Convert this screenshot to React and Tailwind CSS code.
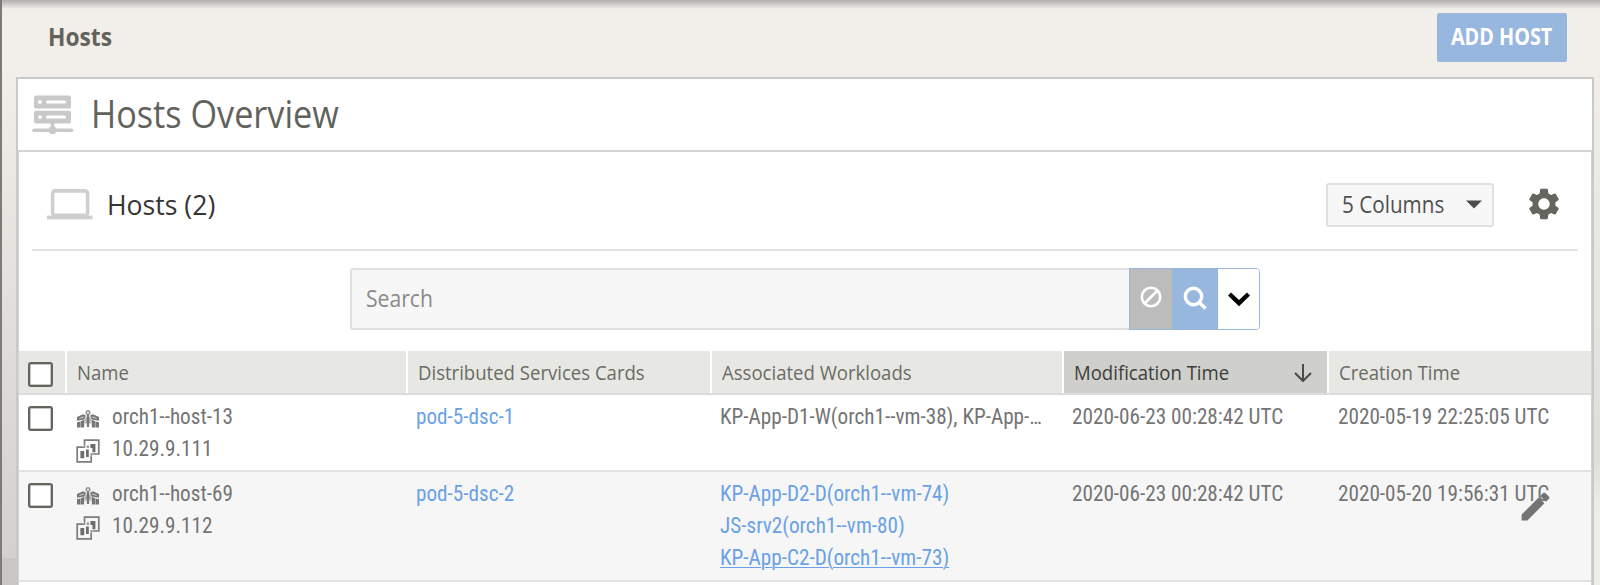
import React from 'react';
import { MdSettings, MdEdit } from 'react-icons/md';

const HEAD_FONT = "font-['Open_Sans',sans-serif]";
const NARROW = "inline-block origin-left scale-x-[0.905]";

const ServerIcon = () => (
  <svg className="block h-[40px] w-[42px]" viewBox="0 0 42 40" fill="none">
    <path fill="#c9c9c9" fillRule="evenodd" d="M4 0.500h33a2 2 0 0 1 2 2v9a2 2 0 0 1-2 2H4a2 2 0 0 1-2-2v-9a2 2 0 0 1 2-2zM8 5a1.900 1.900 0 1 0 0 3.800A1.900 1.900 0 0 0 8 5zM15.500 5.400a1.500 1.500 0 0 0 0 3h17a1.500 1.500 0 0 0 0-3z" />
    <path fill="#c9c9c9" fillRule="evenodd" d="M4 15.800h33a2 2 0 0 1 2 2v8.800a2 2 0 0 1-2 2H4a2 2 0 0 1-2-2v-8.800a2 2 0 0 1 2-2zM8 20.200a1.900 1.900 0 1 0 0 3.800A1.900 1.900 0 0 0 8 20.200zM15.500 20.600a1.500 1.500 0 0 0 0 3h17a1.500 1.500 0 0 0 0-3z" />
    <path stroke="#c9c9c9" strokeWidth="3.600" strokeLinecap="round" d="M2 35.200h37.500" />
    <path stroke="#c9c9c9" strokeWidth="3.600" d="M20.500 28v5" />
    <circle cx="20.500" cy="35.200" r="3.900" fill="#c9c9c9" />
  </svg>
);

const LaptopIcon = () => (
  <svg className="mt-[2px] block h-[31px] w-[46px]" viewBox="0 0 46 31" fill="none">
    <rect x="5.600" y="1.900" width="35" height="24.400" rx="2.500" stroke="#cfcfcd" strokeWidth="3.600" />
    <rect x="0" y="26.600" width="45.500" height="3.800" fill="#cfcfcd" />
  </svg>
);

const HostIcon = () => (
  <svg className="block h-[18px] w-[24px]" viewBox="0 0 24 18">
    <g fill="#767676">
      <path d="M1 7L7 4.200 10 5.600 8.400 9.400 1 10.800z" />
      <path d="M23 7L17 4.200 14 5.600 15.600 9.400 23 10.800z" />
      <path d="M1 12.200l3.600-.8v6H1zM5 11l3.600-1.200-.6 7.600H5z" />
      <path d="M23 12.200l-3.600-.8v6H23zM19 11l-3.600-1.200.6 7.600h3z" />
      <path d="M10.900 5h2.200v12h-2.200z" />
      <path d="M9.400 8l1.500-1v6l-1.500 1zM14.600 8l-1.500-1v6l1.500 1z" opacity=".7" />
    </g>
    <circle cx="12" cy="2.600" r="1.800" fill="#e8e8e8" stroke="#929292" strokeWidth="1.400" />
    <path d="M3.500 8.400l4.500-1.600M20.500 8.400l-4.500-1.600" stroke="#fff" strokeWidth="1.100" opacity=".6" />
  </svg>
);

const VmIcon = () => (
  <svg className="block h-[24px] w-[24px]" viewBox="0 0 24 24" fill="none">
    <path stroke="#7c7c7c" strokeWidth="1.700" d="M8.500 5.800V1.200h14.300v13.800H18" />
    <path stroke="#7c7c7c" strokeWidth="1.700" d="M6.500 8.200H1.200v14.600h14v-5.300" />
    <path stroke="#8c8c8c" strokeWidth="1.400" d="M6 8.200h2.500V5.500M15.200 18V15H18.500" />
    <path fill="#6c6c6c" d="M14.400 5h5v8.200h-3V9h-2zM4.400 12h3.800v7.300H4.400zM10 10.500h2.800v7.500H10z" />
    <path fill="#909090" d="M10.600 6.500h2.400v2.300h-2.400z" />
  </svg>
);

const Box = () => <span className="block h-[25px] w-[25px] rounded-[3px] border-2 border-[#65655f] bg-white shadow-[inset_0_0_0_0.5px_#8f8f8a]" />;

function HostName({ name, ip }) {
  return (
    <div className="flex flex-col">
      <div className="flex h-[32px] items-center gap-[12px]">
        <span className="w-[24px] pt-[3px]"><HostIcon /></span>
        {name}
      </div>
      <div className="flex h-[32px] items-center gap-[12px]">
        <span className="w-[24px] pt-[3px]"><VmIcon /></span>
        {ip}
      </div>
    </div>
  );
}

const COLS = "grid grid-cols-[46px_341px_304px_352px_265px_1fr]";
const BODY = "font-[Roboto,sans-serif] text-[21.200px] leading-[32px] font-stretch-75% text-[#747474]";
const LINK = "text-[#6aa1e6] font-[450]";

function HeadCell({ children, icon, className = "bg-[#e7e8e3] text-[#6b6b65]" }) {
  return (
    <div className={"flex items-center justify-between border-l-2 border-white pl-[10px] " + className}>
      <span className={NARROW}>{children}</span>
      {icon}
    </div>
  );
}

export default function App() {
  return (
    <div className="relative flex h-[585px] w-[1600px] flex-col overflow-hidden border-l-2 border-[#7d7b79] bg-[#f2eeea] whitespace-nowrap">
      <div className="absolute inset-x-0 top-0 h-[9px] bg-linear-to-b from-[#b0adab] to-[#f2eeea]/0" />
      <header className={"flex h-[77px] shrink-0 items-start justify-between pr-[33px] pl-[46px] " + HEAD_FONT}>
        <h1 className="mt-[18px] text-[25px] leading-[36px] font-bold text-[#63635e]"><span className="inline-block origin-left scale-x-[0.91]">Hosts</span></h1>
        <button className="mt-[13px] flex h-[49px] w-[130px] items-center justify-center rounded-[2px] bg-[#97b7de] pb-[2px] text-[22.500px] font-bold text-white">
          <span className="inline-block scale-x-[0.88]">ADD HOST</span>
        </button>
      </header>

      <div className="flex grow">
        <div className="flex w-[14px] shrink-0 flex-col">
          <div className="h-[481px] bg-linear-to-b from-[#f1eeea] via-[#dedcd8] via-60% to-[#d3d1cd]" />
          <div className="grow bg-[#c9c7c4]" />
        </div>
        <main className="flex w-[1578px] shrink-0 flex-col border-x-2 border-t-2 border-[#c9c9c9] bg-white">
          <section className={"flex h-[71px] shrink-0 items-center pl-[14px] " + HEAD_FONT}>
            <ServerIcon />
            <h2 className="ml-[17px] pb-[3px] text-[38px] leading-[48px] font-[450] text-[#62625d]"><span className="inline-block origin-left scale-x-[0.9]">Hosts Overview</span></h2>
          </section>

          <section className="flex grow flex-col border-x border-t-2 border-[#d4d4d4]">
            <div className={"mx-[13px] flex h-[99px] shrink-0 items-center border-b-2 border-[#e3e3e3] pt-[6px] pl-[15px] " + HEAD_FONT}>
              <LaptopIcon />
              <h3 className="ml-[14px] text-[28px] font-[450] text-[#353535]"><span className="inline-block origin-left scale-x-[0.95]">Hosts (2)</span></h3>
              <div className="mt-[2px] ml-auto flex h-[44px] w-[168px] items-center rounded-[3px] border-2 border-[#e0e0e0] bg-[#f7f7f7] pl-[14px] text-[23.500px] font-[450] text-[#50504d]">
                <span className="w-[124px] shrink-0"><span className="inline-block origin-left scale-x-[0.88]">5 Columns</span></span>
                <svg className="h-[9px] w-[16px] shrink-0" viewBox="0 0 16 9"><path d="M0 0.500h16L8 8.500z" fill="#4c4c4c" /></svg>
              </div>
              <MdSettings className="mr-[15px] ml-[31px] h-[38px] w-[38px] text-[#65655f]" />
            </div>

            <div className="mt-[17px] ml-[331px] flex h-[62px] w-[910px] shrink-0">
              <div className={"flex grow items-center rounded-l-[3px] border-2 border-r-0 border-[#e0e0e0] bg-[#f7f7f7] pl-[14px] text-[23.500px] font-[450] text-[#8a8a8a] " + HEAD_FONT}>
                <span className="inline-block origin-left scale-x-[0.9]">Search</span>
              </div>
              <div className="flex w-[131px] overflow-hidden rounded-r-[4px] border border-[#97b7de]">
                <div className="flex w-[42px] items-center justify-center bg-[#bcbcbc]">
                  <svg className="mb-[4px] h-[22px] w-[22px]" viewBox="0 0 22 22" fill="none" stroke="#fff" strokeWidth="2.600">
                    <circle cx="11" cy="11" r="9.200" />
                    <path d="M4.500 17.500l13-13" />
                  </svg>
                </div>
                <div className="flex w-[46px] items-center justify-center bg-[#97b7de]">
                  <svg className="mb-[2px] h-[24px] w-[24px]" viewBox="0 0 24 24" fill="none" stroke="#fff">
                    <circle cx="10.500" cy="10.500" r="8.200" strokeWidth="3.400" />
                    <path d="M16.500 16.500l6 6" strokeWidth="3.600" />
                  </svg>
                </div>
                <div className="flex grow items-center justify-center bg-white">
                  <svg className="h-[15px] w-[22px]" viewBox="0 0 22 15"><path d="M3 0.500L11 8 19 0.500 22 3.600 11 14.300 0 3.600z" fill="#000" /></svg>
                </div>
              </div>
            </div>

            <div className={"mt-[21px] h-[44px] shrink-0 border-b-2 border-[#dcdddb] bg-[#e7e8e3] text-[20.500px] font-medium " + COLS + " " + HEAD_FONT}>
              <div className="flex items-center pt-[4px] pl-[9px]"><Box /></div>
              <HeadCell>Name</HeadCell>
              <HeadCell>Distributed Services Cards</HeadCell>
              <HeadCell>Associated Workloads</HeadCell>
              <HeadCell
                className="bg-[#cfd0cb] pr-[15px] text-[#3d3d39]"
                icon={<svg className="mt-[2px] h-[18px] w-[18px]" viewBox="0 0 18 18" fill="none" stroke="#4a4a46" strokeWidth="2"><path d="M9 0v16.500M1 9l8 8 8-8" /></svg>}
              >
                Modification Time
              </HeadCell>
              <HeadCell>Creation Time</HeadCell>
            </div>

            <div className={"h-[77px] shrink-0 border-b-2 border-[#e2e2e2] bg-white pt-[6px] " + BODY + " " + COLS}>
              <div className="pt-[5px] pl-[9px]"><Box /></div>
              <div className="pl-[11px]"><HostName name="orch1--host-13" ip="10.29.9.111" /></div>
              <div className={"pl-[10px] " + LINK}>pod-5-dsc-1</div>
              <div className="pl-[10px]">KP-App-D1-W(orch1--vm-38), KP-App-…</div>
              <div className="pl-[10px]">2020-06-23 00:28:42 UTC</div>
              <div className="pl-[11px]">2020-05-19 22:25:05 UTC</div>
            </div>

            <div className={"relative h-[110px] shrink-0 border-b-2 border-[#e2e2e2] bg-[#f6f6f6] pt-[6px] " + BODY + " " + COLS}>
              <div className="pt-[5px] pl-[9px]"><Box /></div>
              <div className="pl-[11px]"><HostName name="orch1--host-69" ip="10.29.9.112" /></div>
              <div className={"pl-[10px] " + LINK}>pod-5-dsc-2</div>
              <div className={"flex flex-col pl-[10px] " + LINK}>
                <a>KP-App-D2-D(orch1--vm-74)</a>
                <a>JS-srv2(orch1--vm-80)</a>
                <a className="underline decoration-1 underline-offset-2">KP-App-C2-D(orch1--vm-73)</a>
              </div>
              <div className="pl-[10px]">2020-06-23 00:28:42 UTC</div>
              <div className="pl-[11px]">2020-05-20 19:56:31 UTC</div>
              <MdEdit className="absolute top-[16px] right-[37px] h-[37px] w-[37px] text-[#747474]" />
            </div>
          </section>
        </main>
        <div className="grow bg-linear-to-b from-[#f1eeea] via-[#e0deda] via-75% to-[#efede9] to-85%" />
      </div>
    </div>
  );
}
